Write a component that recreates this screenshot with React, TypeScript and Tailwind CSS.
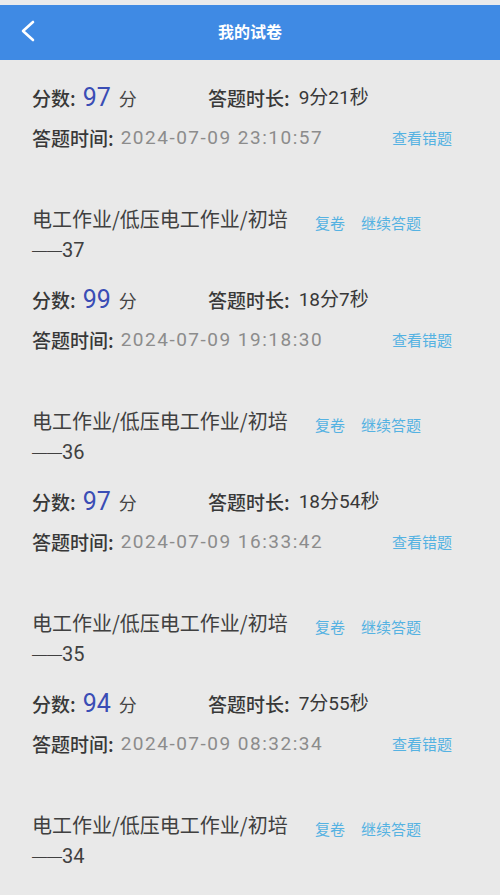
type Record = {
  title?: string
  no?: string
  score: string
  duration: string
  time: string
}

const records: Record[] = [
  { score: '97', duration: '9分21秒', time: '2024-07-09 23:10:57' },
  { title: '电工作业/低压电工作业/初培', no: '37', score: '99', duration: '18分7秒', time: '2024-07-09 19:18:30' },
  { title: '电工作业/低压电工作业/初培', no: '36', score: '97', duration: '18分54秒', time: '2024-07-09 16:33:42' },
  { title: '电工作业/低压电工作业/初培', no: '35', score: '94', duration: '7分55秒', time: '2024-07-09 08:32:34' },
  { title: '电工作业/低压电工作业/初培', no: '34', score: '', duration: '', time: '' },
]

const cjk = { fontFamily: '"Noto Sans CJK SC", "Noto Sans", sans-serif' }
const num = { fontFamily: 'Roboto, "Noto Sans CJK SC", sans-serif' }
const dash = { fontFamily: '"Liberation Sans", sans-serif' }

function Stats({ r }: { r: Record }) {
  return (
    <div>
      {/* score + duration */}
      <div className="flex items-center h-[40px]">
        <div className="w-[176px] flex items-baseline">
          <span className="text-[19px] font-medium text-[#383838]">分数:</span>
          <span className="text-[25px] text-[#3a4db5] ml-[7px]" style={num}>{r.score}</span>
          <span className="text-[18px] text-[#444] ml-[8px]">分</span>
        </div>
        <span className="text-[19px] font-medium text-[#383838]">答题时长:</span>
        <span className="text-[19px] text-[#383838] ml-[9px]" style={num}>{r.duration}</span>
      </div>
      {/* time + wrong answers */}
      <div className="flex items-center justify-between h-[40px] pr-[48px]">
        <div className="flex items-center">
          <span className="text-[19px] font-medium text-[#383838]">答题时间:</span>
          <span className="text-[19px] tracking-[1.5px] text-[#8c8c8c] ml-[7px]" style={num}>{r.time}</span>
        </div>
        <span className="text-[15px] text-[#55b2e2]">查看错题</span>
      </div>
    </div>
  )
}

export default function App() {
  return (
    <div className="w-[500px] h-[895px] overflow-hidden bg-[#e9e9e9]" style={cjk}>
      <div className="h-[5px] bg-[#e9eaec]" />
      <header className="h-[55px] bg-[#3f8ae4] flex items-center relative">
        <svg width="16" height="22" viewBox="0 0 16 22" className="ml-[20px] mb-[3px]" fill="none">
          <polyline points="13,2 3,11 13,20" stroke="white" strokeWidth="2.6" strokeLinecap="round" strokeLinejoin="round" />
        </svg>
        <h1 className="absolute inset-x-0 pb-[3px] text-center text-[16px] font-semibold text-white pointer-events-none">
          我的试卷
        </h1>
      </header>

      <main className="pl-[32px] pt-[18px]">
        {records.map((r, i) => (
          <div key={i} className={i > 0 ? 'mt-[47px]' : ''}>
            {r.title && (
              <div className="mb-[15px]">
                <div className="flex items-center h-[30px]">
                  <span className="w-[283px] text-[20px] text-[#404040] mb-[3px]">{r.title}</span>
                  <span className="text-[15px] text-[#55b2e2] mt-[6px]">复卷</span>
                  <span className="text-[15px] text-[#55b2e2] mt-[6px] ml-[16px]">继续答题</span>
                </div>
                <div className="h-[30px] flex items-center text-[#404040]">
                  <span className="text-[15px]" style={dash}>——</span>
                  <span className="text-[20px]" style={num}>{r.no}</span>
                </div>
              </div>
            )}
            {r.score && <Stats r={r} />}
          </div>
        ))}
      </main>
    </div>
  )
}
